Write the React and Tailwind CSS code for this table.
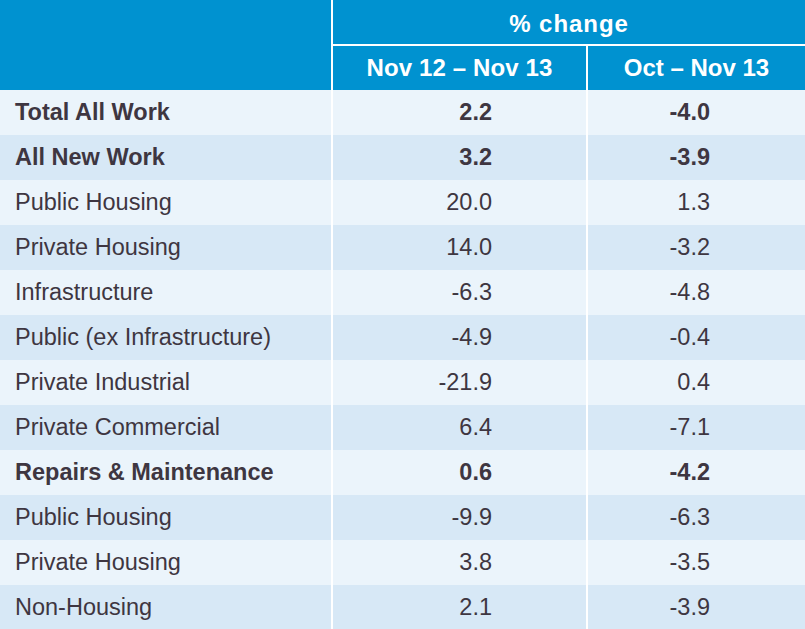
import React from "react";

const rows = [
  { label: "Total All Work", a: "2.2", b: "-4.0", bold: true },
  { label: "All New Work", a: "3.2", b: "-3.9", bold: true },
  { label: "Public Housing", a: "20.0", b: "1.3" },
  { label: "Private Housing", a: "14.0", b: "-3.2" },
  { label: "Infrastructure", a: "-6.3", b: "-4.8" },
  { label: "Public (ex Infrastructure)", a: "-4.9", b: "-0.4" },
  { label: "Private Industrial", a: "-21.9", b: "0.4" },
  { label: "Private Commercial", a: "6.4", b: "-7.1" },
  { label: "Repairs & Maintenance", a: "0.6", b: "-4.2", bold: true },
  { label: "Public Housing", a: "-9.9", b: "-6.3" },
  { label: "Private Housing", a: "3.8", b: "-3.5" },
  { label: "Non-Housing", a: "2.1", b: "-3.9" },
];

export default function App() {
  return (
    <div className="w-[805px] h-[629px] bg-white overflow-hidden text-[23.5px] text-[#3e3641]" style={{ fontFamily: '"Liberation Sans", Arial, sans-serif' }}>
      {/* header */}
      <div className="grid grid-cols-[331px_1fr] gap-x-[2px] h-[90px]">
        <div className="bg-[#0092d0]" />
        <div className="flex flex-col gap-y-[2px]">
          <div className="h-[44px] pt-[3px] bg-[#0092d0] flex items-center justify-center text-white font-bold text-[24px] tracking-[0.04em]">% change</div>
          <div className="grid grid-cols-[253px_1fr] gap-x-[2px] flex-1 text-[24px]">
            <div className="bg-[#0092d0] flex items-center justify-center text-white font-bold tracking-[0.005em]">Nov 12 – Nov 13</div>
            <div className="bg-[#0092d0] flex items-center justify-center text-white font-bold">Oct – Nov 13</div>
          </div>
        </div>
      </div>

      {/* body */}
      {rows.map((r, i) => {
        const bg = i % 2 === 0 ? "bg-[#ebf4fb]" : "bg-[#d7e8f6]";
        return (
          <div key={i} className={`grid grid-cols-[331px_253px_1fr] gap-x-[2px] h-[45px] ${r.bold ? "font-bold" : ""}`}>
            <div className={`${bg} flex items-center pt-[1px] pl-[15px]`}>{r.label}</div>
            <div className={`${bg} flex items-center justify-end pt-[1px] pr-[94px]`}>{r.a}</div>
            <div className={`${bg} flex items-center justify-end pt-[1px] pr-[95px]`}>{r.b}</div>
          </div>
        );
      })}
    </div>
  );
}
